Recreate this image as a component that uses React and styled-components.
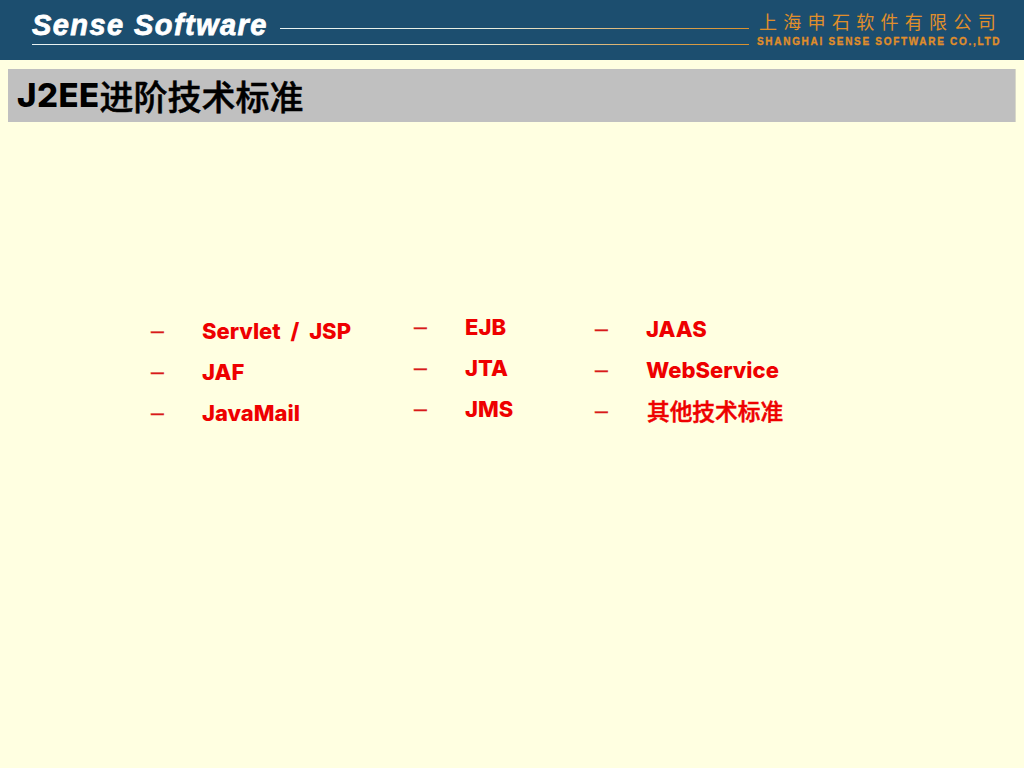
import React from "react";
import styled, { createGlobalStyle } from "styled-components";

const Global = createGlobalStyle`
  html, body { margin: 0; padding: 0; }
  body { background: #ffffe1; font-family: "Liberation Sans", "Noto Sans CJK SC", sans-serif; }
`;
const Page = styled.div`
  width: 1024px; height: 768px; overflow: hidden; background: #ffffe1;
  display: flex; flex-direction: column;
`;
const Header = styled.header`
  height: 60px; flex: none; background: #1c4e6f; box-sizing: border-box;
  padding: 0 23px 0 32px; display: flex; align-items: flex-start; gap: 8px;
`;
const Brand = styled.div`
  width: 717px; flex: none; height: 45px; display: flex; flex-direction: column; justify-content: flex-end;
`;
const BrandRow = styled.div`
  display: flex; align-items: center; gap: 12px; height: 44px; box-sizing: border-box; padding-top: 6px;
`;
const BrandName = styled.div`
  font: italic bold 29px/36px "Liberation Sans", sans-serif; color: #fff; letter-spacing: 1.42px; white-space: nowrap; flex: none;
  -webkit-text-stroke: 0.8px #fff;
`;
const Rule = styled.div`
  height: 1px; background: linear-gradient(90deg, #e8f2f2 0%, #e8eee0 62%, #d6a050 88%, #d8902e 100%);
`;
const UpperRule = styled(Rule)`
  flex: 1; margin-top: 7px; background: linear-gradient(90deg, #e8f2f2 0%, #e8eee0 45%, #d6a050 85%, #d8902e 100%);
`;
const Company = styled.div`
  color: #e08e2a; display: flex; flex-direction: column; padding-top: 9px;
`;
const CompanyCn = styled.div`
  font: 18px/24px "Noto Sans CJK SC", sans-serif; letter-spacing: 6.3px; padding-left: 2px; white-space: nowrap;
`;
const CompanyEn = styled.div`
  font: bold 10px/12px "Liberation Sans", sans-serif; letter-spacing: 1.7px; white-space: nowrap; margin-top: 3px;
  -webkit-text-stroke: 0.3px #e08e2a;
`;
const TitleBar = styled.h1`
  margin: 9px 8px 0; height: 53px; flex: none; background: #c0c0c0; box-sizing: border-box; padding: 0 0 0 9px;
  border-right: 1px solid #d8d8c8;
  display: flex; align-items: center; color: #000;
`;
const TitleLatin = styled.span`
  font: 800 33px/55px "Inter", sans-serif; letter-spacing: 0.45px;
`;
const TitleCn = styled.span`
  font: 500 34px/55px "Noto Sans CJK SC", sans-serif; -webkit-text-stroke: 0.5px #000;
`;
const Lists = styled.main`
  display: flex; padding: 0 0 0 150px; margin-top: 187px; align-items: flex-start;
`;
const Column = styled.ul`
  list-style: none; margin: ${p => p.$top}px 0 0; padding: 0; width: ${p => p.$width}px; flex: none;
`;
const Item = styled.li`
  height: 41px; display: flex; align-items: center; color: #ee0000;
  font: 800 22px/41px "Inter", "Noto Sans CJK SC", sans-serif;
`;
const Dash = styled.span`
  width: 52px; flex: none; font: 400 23px/41px "Liberation Sans", sans-serif; color: #d81a1a; padding-left: 1px; box-sizing: border-box;
  -webkit-text-stroke: 0.4px #d81a1a; margin-top: -3px;
`;
const Label = styled.span`
  white-space: nowrap; word-spacing: 5px;
`;
const CnLabel = styled(Label)`
  font: 500 22.7px/41px "Noto Sans CJK SC", sans-serif; -webkit-text-stroke: 0.5px #ee0000;
  padding-left: 1px; margin-top: -2px;
`;

const cols = [
  { width: 263, top: 2, items: ["Servlet / JSP", "JAF", "JavaMail"] },
  { width: 181, top: -2, items: ["EJB", "JTA", "JMS"] },
  { width: 220, top: 0, items: ["JAAS", "WebService", "其他技术标准"] },
];

export default function App() {
  return (
    <Page>
      <Global />
      <Header>
        <Brand>
          <BrandRow>
            <BrandName>Sense Software</BrandName>
            <UpperRule />
          </BrandRow>
          <Rule />
        </Brand>
        <Company>
          <CompanyCn>上海申石软件有限公司</CompanyCn>
          <CompanyEn>SHANGHAI SENSE SOFTWARE CO.,LTD</CompanyEn>
        </Company>
      </Header>
      <TitleBar>
        <TitleLatin>J2EE</TitleLatin>
        <TitleCn>进阶技术标准</TitleCn>
      </TitleBar>
      <Lists>
        {cols.map((c) => (
          <Column key={c.items[0]} $width={c.width} $top={c.top}>
            {c.items.map((t) => (
              <Item key={t}>
                <Dash>–</Dash>
                {/[\u4e00-\u9fff]/.test(t) ? <CnLabel>{t}</CnLabel> : <Label>{t}</Label>}
              </Item>
            ))}
          </Column>
        ))}
      </Lists>
    </Page>
  );
}
